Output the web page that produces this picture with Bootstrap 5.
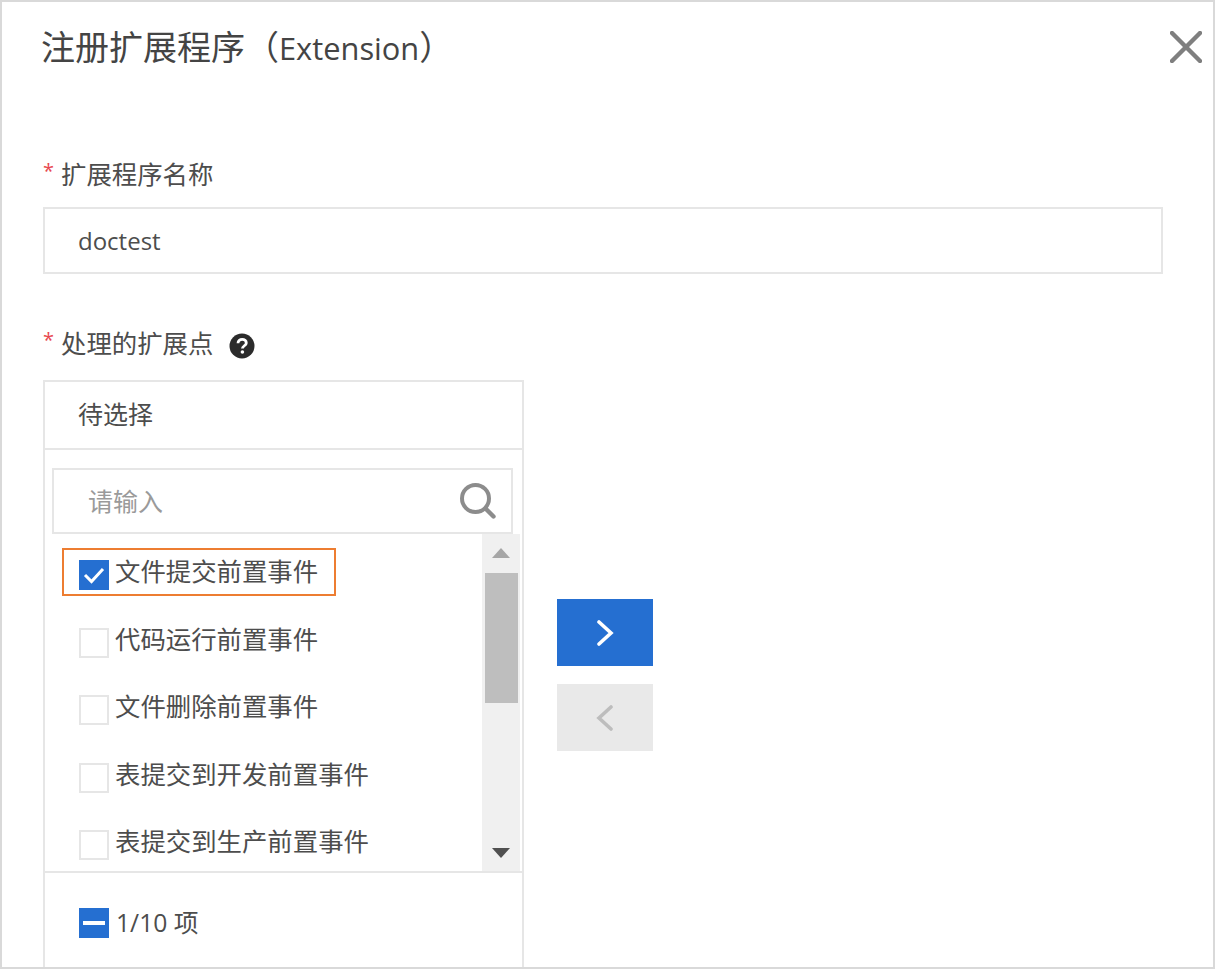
<!DOCTYPE html>
<html lang="zh">
<head>
    <meta charset="UTF-8">
    <meta name="viewport" content="width=device-width, initial-scale=1.0">
    <title>注册扩展程序</title>
    <link href="https://cdn.jsdelivr.net/npm/bootstrap@5.3.3/dist/css/bootstrap.min.css" rel="stylesheet">
    <style>
        html, body { height: 100%; overflow: hidden; background: #fff; }
        body { font-family: "Open Sans", "Noto Sans CJK SC", sans-serif; color: #4d4d4d; font-size: 25px; }
        .frame { height: 969px; border: 2px solid #d9d9d9; overflow: hidden; padding: 0 50px 0 41px; position: relative; }
        .head-row { height: 92px; }
        .head-title { font-size: 34px; font-weight: 400; margin: 0 0 0 -2px; color: #444; line-height: 90px; }
        .latin-part { font-size: 30.8px; }
        .close-x { position: absolute; right: 11px; top: 29px; width: 32px; height: 32px; }
        .field-label { font-size: 25.4px; line-height: 36px; display: flex; align-items: center; }
        .label-one { margin-top: 62px; }
        .label-two { margin-top: 51px; }
        .req { color: #e8484f; width: 18px; font-size: 20px; line-height: 36px; margin-top: -6px; }
        .name-field { height: 67px; border: 2px solid #e6e6e6; padding-left: 33px; line-height: 63px; margin-top: 15px; font-size: 24px; }
        .help-dot { margin-left: 16px; margin-top: 5px; }
        .shuttle { width: 481px; border: 2px solid #e6e6e6; margin-top: 19px; height: 640px; }
        .shuttle-head { height: 68px; border-bottom: 2px solid #e6e6e6; padding-left: 33px; line-height: 64px; }
        .search-wrap { padding: 18px 9px 0 7px; }
        .search-box { height: 66px; border: 2px solid #e6e6e6; padding: 0 15px 0 34px; color: #9a9a9a; }
        .search-hint { margin-top: 2px; }
        .list-wrap { height: 339px; border-bottom: 2px solid #e6e6e6; }
        .opt-list { padding: 5px 0 0 34px; }
        .opt-row { height: 67.5px; gap: 6px; position: relative; }
        .tick { width: 30px; height: 30px; border: 2px solid #e6e6e6; background: #fff; flex: none; margin-top: 5px; }
        .tick-on { background: #256fd1; border-color: #256fd1; }
        .opt-text { font-size: 25.4px; line-height: 36px; white-space: nowrap; color: #4d4d4d; margin-top: -3px; }
        .mark-box { position: absolute; left: -17px; top: 9px; width: 274px; height: 48px; border: 2px solid #ed7d31; pointer-events: none; }
        .scroll-rail { width: 38px; background: #f0f0f0; margin-right: 2px; flex: none; }
        .scroll-thumb { width: 33px; height: 130px; background: #bebebe; margin: 0 auto; }
        .scroll-up { height: 39px; }
        .scroll-space { height: 132px; }
        .scroll-down { height: 37px; }
        .shuttle-foot { padding: 31px 0 0 34px; gap: 7px; }
        .foot-text { font-size: 24.7px; }
        .move-btns { margin: 238px 0 0 33px; gap: 18px; }
        .move-btn { width: 96px; height: 67px; padding: 0; border-radius: 0; border: 0; }
        .move-on { background: #256fd1; }
        .move-off { background: #e9e9e9; }
    </style>
</head>
<body>

    <div class="frame">
        <!-- 标题 -->
        <div class="head-row">
            <h1 class="head-title">注册扩展程序（<span class="latin-part">Extension</span>）</h1>
        </div>
        <svg class="close-x" viewBox="0 0 32 32"><path d="M2 2 L30 30 M30 2 L2 30" stroke="#7f7f7f" stroke-width="4.4" stroke-linecap="round"/></svg>

        <!-- 名称 -->
        <div class="field-label label-one"><span class="req">*</span>扩展程序名称</div>
        <div class="name-field">doctest</div>

        <!-- 扩展点 -->
        <div class="field-label label-two">
            <span class="req">*</span>处理的扩展点
            <svg class="help-dot" width="26" height="26" viewBox="0 0 26 26">
                <circle cx="13" cy="13" r="12.5" fill="#2b2b2b"/>
                <path d="M9 10.2 C9 7.6 11 6.4 13.2 6.4 C15.6 6.4 17.3 7.9 17.3 9.9 C17.3 12.6 13.4 12.9 13.4 15.6" fill="none" stroke="#fff" stroke-width="2.8"/>
                <circle cx="13.4" cy="19" r="1.8" fill="#fff"/>
            </svg>
        </div>

        <div class="d-flex align-items-start">
            <div class="shuttle flex-shrink-0">
                <div class="shuttle-head">待选择</div>
                <div class="search-wrap">
                    <div class="search-box d-flex align-items-center justify-content-between">
                        <span class="search-hint">请输入</span>
                        <svg width="36" height="36" viewBox="0 0 36 36"><circle cx="15.5" cy="15.5" r="13.5" fill="none" stroke="#8c8c8c" stroke-width="4"/><path d="M26 26 L33.5 33.5" stroke="#8c8c8c" stroke-width="4.4" stroke-linecap="round"/></svg>
                    </div>
                </div>
                <div class="list-wrap d-flex justify-content-between">
                    <div class="opt-list">
                        <div class="opt-row d-flex align-items-center">
                            <span class="tick tick-on d-flex align-items-center justify-content-center">
                                <svg width="22" height="18" viewBox="0 0 22 18"><path d="M2 9 L8.5 15.5 L20 3" fill="none" stroke="#fff" stroke-width="3"/></svg>
                            </span>
                            <span class="opt-text">文件提交前置事件</span>
                            <span class="mark-box"></span>
                        </div>
                        <div class="opt-row d-flex align-items-center"><span class="tick"></span><span class="opt-text">代码运行前置事件</span></div>
                        <div class="opt-row d-flex align-items-center"><span class="tick"></span><span class="opt-text">文件删除前置事件</span></div>
                        <div class="opt-row d-flex align-items-center"><span class="tick"></span><span class="opt-text">表提交到开发前置事件</span></div>
                        <div class="opt-row d-flex align-items-center"><span class="tick"></span><span class="opt-text">表提交到生产前置事件</span></div>
                    </div>
                    <div class="scroll-rail d-flex flex-column">
                        <div class="scroll-up d-flex justify-content-center align-items-center"><svg width="18" height="10" viewBox="0 0 18 10"><path d="M9 0 L18 10 L0 10 Z" fill="#a6a6a6"/></svg></div>
                        <div class="scroll-thumb"></div>
                        <div class="scroll-space"></div>
                        <div class="scroll-down d-flex justify-content-center align-items-center"><svg width="18" height="10" viewBox="0 0 18 10"><path d="M0 0 L18 0 L9 10 Z" fill="#505050"/></svg></div>
                    </div>
                </div>
                <div class="shuttle-foot d-flex align-items-center">
                    <span class="tick tick-on d-flex align-items-center justify-content-center m-0">
                        <svg width="22" height="4" viewBox="0 0 22 4"><rect width="22" height="4" fill="#fff"/></svg>
                    </span>
                    <span class="foot-text">1/10 项</span>
                </div>
            </div>

            <div class="move-btns d-flex flex-column">
                <button type="button" class="btn move-btn move-on d-flex align-items-center justify-content-center" aria-label="move right">
                    <svg width="18" height="26" viewBox="0 0 18 26"><path d="M3 2 L15 13 L3 24" fill="none" stroke="#fff" stroke-width="3.6" stroke-linecap="round"/></svg>
                </button>
                <button type="button" class="btn move-btn move-off d-flex align-items-center justify-content-center" aria-label="move left">
                    <svg width="18" height="26" viewBox="0 0 18 26"><path d="M15 2 L3 13 L15 24" fill="none" stroke="#bdbdbd" stroke-width="3.6" stroke-linecap="round"/></svg>
                </button>
            </div>
        </div>
    </div>

    <script src="https://cdn.jsdelivr.net/npm/bootstrap@5.3.3/dist/js/bootstrap.bundle.min.js"></script>
</body>
</html>
